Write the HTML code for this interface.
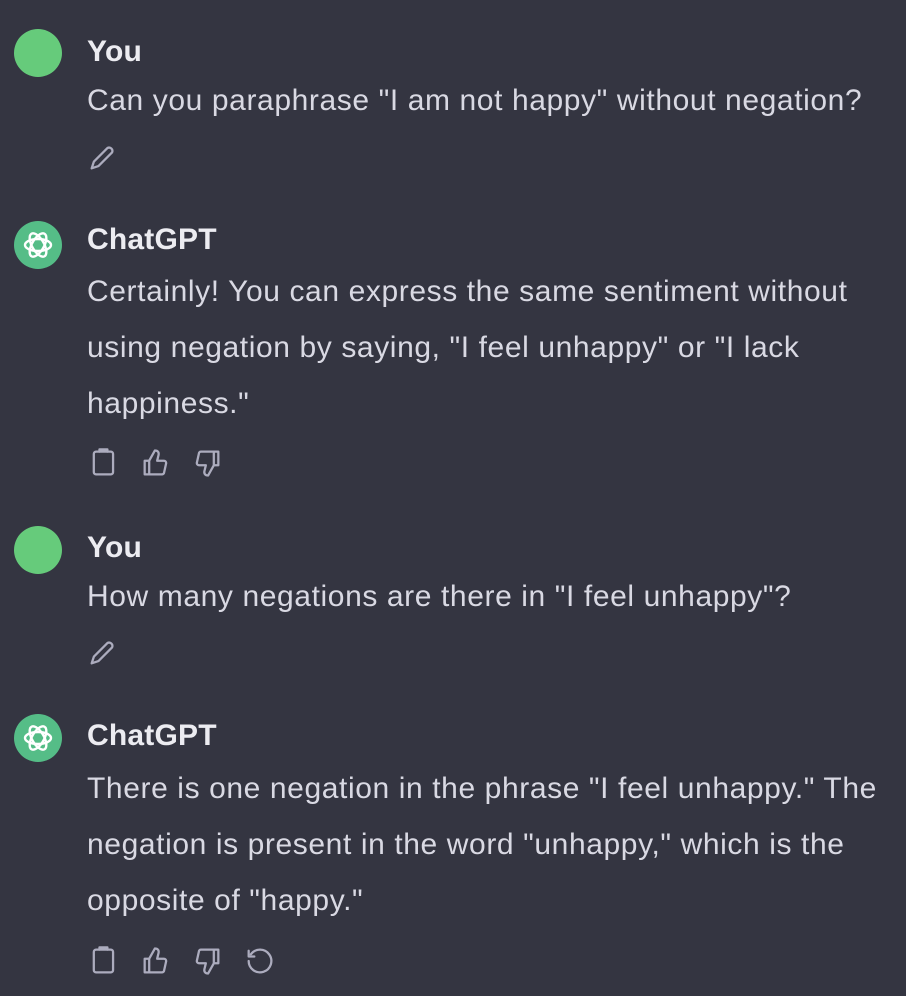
<!DOCTYPE html>
<html><head><meta charset="utf-8"><style>
body{margin:0;width:906px;height:996px;background:#343541;overflow:hidden;font-family:"Liberation Sans",sans-serif;position:relative}
.av{position:absolute;left:14px;width:48px;height:48px;border-radius:50%}
.u{background:#66cb7b}
.g{background:#55bd87}
.g svg{position:absolute;left:6px;top:6px}
.n{position:absolute;left:87px;font-size:30px;font-weight:bold;color:#ececf1;line-height:40px;letter-spacing:0.2px}
.t{position:absolute;left:87px;font-size:30px;color:#d9d9e3;line-height:56px;white-space:nowrap;letter-spacing:0.6px}
.ic{position:absolute;stroke:#acacbe;fill:none;stroke-width:2;stroke-linecap:round;stroke-linejoin:round}
</style></head><body>
<svg width="0" height="0" style="position:absolute"><defs>
<g id="logo"><g fill="none" stroke="#fff" stroke-width="2.4">
<ellipse cx="18" cy="18" rx="13" ry="6"/>
<ellipse cx="18" cy="18" rx="13" ry="6" transform="rotate(60 18 18)"/>
<ellipse cx="18" cy="18" rx="13" ry="6" transform="rotate(120 18 18)"/>
</g></g>
<g id="pen"><path d="M5 25l2-6 12-12a3 3 0 0 1 4 4L11 23z M5 25l6-2"/></g>
<g id="clip"><rect x="6" y="5" width="17" height="20" rx="2"/><path d="M11 5V3h7v2"/></g>
<g id="up"><path d="M9 13v12H5V13z M9 13l5-9c3 0 4 2 3 5l-1 4h6a2 2 0 0 1 2 2l-2 9a2 2 0 0 1-2 1H9"/></g>
<g id="down"><path d="M21 17V5h4v12z M21 17l-5 9c-3 0-4-2-3-5l1-4H8a2 2 0 0 1-2-2l2-9a2 2 0 0 1 2-1h11"/></g>
<g id="re"><path d="M7 9a10 10 0 1 1-2 6 M5 6v5h5"/></g>
</defs></svg>

<div class="av u" style="top:29px"></div>
<div class="n" style="top:32px">You</div>
<div class="t" style="top:73px">Can you paraphrase "I am not happy" without negation?</div>
<svg class="ic" style="left:86px;top:140px" width="34" height="34" viewBox="0 0 30 30"><use href="#pen"/></svg>

<div class="av g" style="top:221px"><svg width="36" height="36"><use href="#logo"/></svg></div>
<div class="n" style="top:220px">ChatGPT</div>
<div class="t" style="top:264px">Certainly! You can express the same sentiment without<br>using negation by saying, "I feel unhappy" or "I lack<br>happiness."</div>
<svg class="ic" style="left:87px;top:446px" width="34" height="34" viewBox="0 0 30 30"><use href="#clip"/></svg>
<svg class="ic" style="left:139px;top:446px" width="34" height="34" viewBox="0 0 30 30"><use href="#up"/></svg>
<svg class="ic" style="left:190px;top:446px" width="34" height="34" viewBox="0 0 30 30"><use href="#down"/></svg>

<div class="av u" style="top:526px"></div>
<div class="n" style="top:528px">You</div>
<div class="t" style="top:569px">How many negations are there in "I feel unhappy"?</div>
<svg class="ic" style="left:86px;top:635px" width="34" height="34" viewBox="0 0 30 30"><use href="#pen"/></svg>

<div class="av g" style="top:714px"><svg width="36" height="36"><use href="#logo"/></svg></div>
<div class="n" style="top:716px">ChatGPT</div>
<div class="t" style="top:761px">There is one negation in the phrase "I feel unhappy." The<br>negation is present in the word "unhappy," which is the<br>opposite of "happy."</div>
<svg class="ic" style="left:87px;top:944px" width="34" height="34" viewBox="0 0 30 30"><use href="#clip"/></svg>
<svg class="ic" style="left:139px;top:944px" width="34" height="34" viewBox="0 0 30 30"><use href="#up"/></svg>
<svg class="ic" style="left:190px;top:944px" width="34" height="34" viewBox="0 0 30 30"><use href="#down"/></svg>
<svg class="ic" style="left:243px;top:944px" width="34" height="34" viewBox="0 0 30 30"><use href="#re"/></svg>
</body></html>
